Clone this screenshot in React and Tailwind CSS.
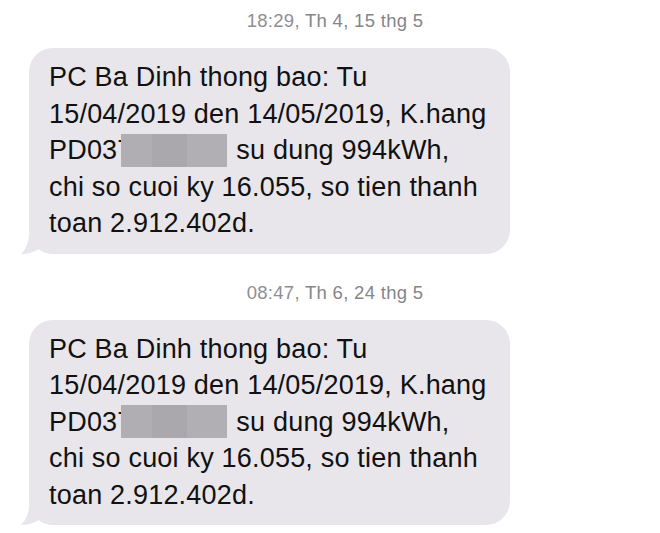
import React from "react";

const messages = [
  { time: "18:29,", date: "Th 4, 15 thg 5" },
  { time: "08:47,", date: "Th 6, 24 thg 5" },
];

function Bubble() {
  return (
    <div className="relative ml-[29px] w-[481px] rounded-[24px] bg-[#e8e6eb] pl-[20px] pr-3 pt-[11px] pb-[12px] text-[27px] leading-[36.5px] tracking-[0.2px] text-[#111]">
      {/* tail */}
      <svg
        className="absolute left-[-9px] bottom-0"
        width="32"
        height="20"
        viewBox="0 0 32 20"
      >
        <path d="M9 0 C9 8 6 15 1 20 C8 20 14 18 19 15 C23 18 27 19 32 20 L32 0 Z" fill="#e8e6eb" />
      </svg>
      <div className="relative whitespace-nowrap">PC Ba Dinh thong bao: Tu</div>
      <div className="relative whitespace-nowrap">15/04/2019 den 14/05/2019, K.hang</div>
      <div className="relative flex items-center whitespace-nowrap">
        <span>PD03</span>
        <span className="w-[4px] overflow-hidden">7</span>
        <span className="flex h-[33px] w-[106px]">
          <span className="w-[31px] bg-[#b0aeb3]" />
          <span className="w-[35px] bg-[#aaa8ad]" />
          <span className="w-[40px] bg-[#b1afb4]" />
        </span>
        <span className="ml-[9px]">su dung 994kWh,</span>
      </div>
      <div className="relative whitespace-nowrap">chi so cuoi ky 16.055, so tien thanh</div>
      <div className="relative whitespace-nowrap">toan 2.912.402d.</div>
    </div>
  );
}

export default function App() {
  return (
    <div
      className="h-[533px] w-[660px] overflow-hidden bg-white"
      style={{ fontFamily: '"Liberation Sans", Arial, sans-serif' }}
    >
      {messages.map((m, i) => (
        <div key={i} className={i === 0 ? "pt-[10px]" : "pt-[28px]"}>
          <div className="pl-[10px] text-center text-[18.5px] leading-[22px] tracking-[0.3px] text-[#8e8e93]">
            {m.time} <span className="text-[#85858a]">{m.date}</span>
          </div>
          <div className="mt-[16px]">
            <Bubble />
          </div>
        </div>
      ))}
    </div>
  );
}
